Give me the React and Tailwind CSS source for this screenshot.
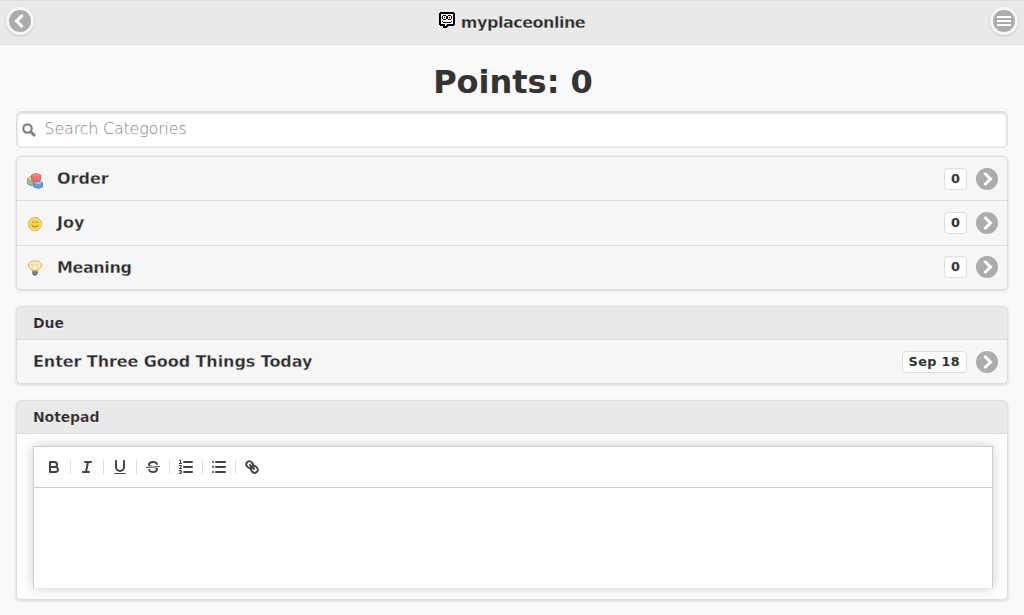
import React from "react";

const Chevron = ({ left }) => (
  <svg viewBox="0 0 14 14" className={left ? "h-[14px] w-[14px] rotate-180 overflow-visible" : "h-[14px] w-[14px] overflow-visible"} fill="#fff">
    <polygon points="3.404,2.051 8.354,7 3.404,11.95 5.525,14.07 12.596,7 5.525,-0.071" />
  </svg>
);

const Arrow = () => (
  <span className="ml-[9px] flex h-[22px] w-[22px] shrink-0 items-center justify-center rounded-full bg-[#acacac]">
    <Chevron />
  </span>
);

const Bubble = ({ children, className = "" }) => (
  <span className={`flex h-[22px] items-center justify-center rounded-[4px] border border-[#ddd] bg-white px-[6px] text-[12.8px] font-bold leading-[20px] ${className}`}>
    {children}
  </span>
);

const HeaderButton = ({ children }) => (
  <button className="flex h-[28px] w-[28px] items-center justify-center rounded-full bg-[#f6f6f6] shadow-[0_1px_3px_rgba(0,0,0,0.15)]">
    <span className="flex h-[22px] w-[22px] items-center justify-center rounded-full bg-[#acacac]">{children}</span>
  </button>
);

const Logo = () => (
  <svg width="16" height="16" viewBox="0 0 16 16" shapeRendering="crispEdges">
    <path d="M1 0h14v1h1v12h-1v1h-6v1h-1v1h-4v-2h-3v-1h-1v-12h1z" fill="#000" />
    <path d="M2 2h12v10h-6v1h-1v1h-1v-2h-4z" fill="#fff" />
    <path d="M4 3h3v1h-3z M3 4h1v3h-1z M4 7h3v1h-3z M7 4h1v3h-1z M5 5h1v1h-1z M9 3h3v1h-3z M8 4h1v3h-1z M9 7h3v1h-3z M12 4h1v3h-1z M10 5h1v1h-1z M3 9h1v1h-1z M4 10h8v1h-8z M12 9h1v1h-1z" fill="#000" />
  </svg>
);

const Cubes = () => (
  <svg width="16" height="16" viewBox="0 0 16 16" strokeWidth=".7" strokeLinejoin="round">
    <path d="M.4 5.5 3.5 3.5 7 5v6.5l-3 1.2-3.6-2z" fill="#8fc48b" stroke="#5b9a5c" />
    <path d="M.8 5.6 4 7l3-1.4-3.4-1.7z" fill="#c4e2be" />
    <path d="M6.5 9.3 10 8l5.6 1.3v4.4L11.5 15.6 6.5 13.7z" fill="#6f9cd3" stroke="#3f6ba6" />
    <path d="M6.8 9.7 11.4 11.2 15.2 9.6 10.5 8.2z" fill="#a9caed" />
    <path d="M4.4 2 9 .5 13.8 2v5.2L9.5 9 4.8 7.4z" fill="#f37373" stroke="#dc4549" />
    <path d="M5 2.2 9.4 3.6 13.3 2.1 9 .9z" fill="#f9a09c" />
    <path d="M7 1.9h4.3M9.4 4.2v4" stroke="#e25556" strokeWidth=".5" />
  </svg>
);

const Smile = () => (
  <svg width="16" height="16" viewBox="0 0 16 16" fill="none">
    <circle cx="8" cy="8" r="6.5" fill="#f8d253" stroke="#e8a921" />
    <circle cx="8" cy="8" r="5.5" stroke="#fde588" />
    <path d="M6 5.4v1.6M10 5.4v1.6" stroke="#a9791c" strokeWidth="1" />
    <path d="M4.3 8.9C5.8 11.5 10.2 11.5 11.7 8.9" stroke="#ad7d20" />
  </svg>
);

const Bulb = () => (
  <svg width="16" height="16" viewBox="0 0 16 16">
    <path d="M5.3 10.8C4.3 9 1.5 8 1.5 5 1.5 2.3 4.5.9 8 .9s6.5 1.4 6.5 4.1c0 3-2.8 4-3.8 5.8z" fill="#ffebc4" stroke="#eca65b" />
    <path d="M6 10V6.5L4.7 4.3 8 5.5l3.3-1.2L10 6.5V10z" fill="#fffdf0" stroke="#f5c95e" strokeWidth=".8" />
    <path d="M5.3 10.8h5.4v3L9.5 15.5h-3l-1.2-1.7z" fill="#5e6466" />
    <path d="M5.5 11.7h5M5.7 13.3h4.6" stroke="#b6babb" strokeWidth=".6" />
  </svg>
);

const panel = "rounded-[5px] border border-[#ddd] shadow-[0_1px_3px_rgba(0,0,0,0.15)]";

const scores = [
  { name: "Order", icon: <Cubes />, row: "h-[43px]", pad: "pt-[4px]", text: "" },
  { name: "Joy", icon: <Smile />, row: "h-[45px] border-t border-[#ddd]", pad: "pt-[2px]", text: "pb-px" },
  { name: "Meaning", icon: <Bulb />, row: "h-[44px] border-t border-[#ddd] pb-px", pad: "pt-px", text: "pt-px tracking-[-0.4px]" },
];

const S = { fill: "none", stroke: "#444", strokeWidth: 2, strokeLinecap: "round", strokeLinejoin: "round" };
const tools = [
  <g key="b" {...S}>
    <path d="M5,4H9.5A2.5,2.5,0,0,1,12,6.5v0A2.5,2.5,0,0,1,9.5,9H5V4Z" />
    <path d="M5,9h5.5A2.5,2.5,0,0,1,13,11.5v0A2.5,2.5,0,0,1,10.5,14H5V9Z" />
  </g>,
  <g key="i" {...S}><path d="M7 4H13M5 14H11M8 14 10 4" /></g>,
  <g key="u" {...S}>
    <path d="M5,3V9a4.012,4.012,0,0,0,4,4H9a4.012,4.012,0,0,0,4-4V3" />
    <rect x="3" y="15" width="12" height="1" rx=".5" fill="#444" stroke="none" />
  </g>,
  <g key="s" fill="#444">
    <path d="M15.5 8.5 2.5 9.5" stroke="#444" strokeWidth="1" strokeLinecap="round" />
    <path d="M9.007,8C6.542,7.791,6,7.519,6,6.5,6,5.792,7.283,5,9,5c1.571,0,2.765.679,2.969,1.309a1,1,0,0,0,1.9-.617C13.356,4.106,11.354,3,9,3,6.2,3,4,4.538,4,6.5a3.2,3.2,0,0,0,.5,1.843Z" />
    <path d="M8.984,10C11.457,10.208,12,10.479,12,11.5c0,0.708-1.283,1.5-3,1.5-1.571,0-2.765-.679-2.969-1.309a1,1,0,1,0-1.9.617C4.644,13.894,6.646,15,9,15c2.8,0,5-1.538,5-3.5a3.2,3.2,0,0,0-.5-1.843Z" />
  </g>,
  <g key="ol" {...S}>
    <path d="M7 4H15M7 9H15M7 14H15" />
    <path d="M2.5 2.5 3.5 2V5.5M2.3 5.5H4.7M2.3 7.5H4.2V8.8L2.5 10.5H4.7M2.3 12.5H4.3V15.5H2.3M3 14H4.3" strokeWidth="1" />
  </g>,
  <g key="ul" {...S}><path d="M6 4H15M6 9H15M6 14H15M3 4H3M3 9H3M3 14H3" /></g>,
  <g key="l" {...S}>
    <path d="M7 7 11 11" />
    <path d="M8.9,4.577a3.476,3.476,0,0,1,.36,4.679A3.476,3.476,0,0,1,4.577,8.9C3.185,7.5,2.035,6.4,4.217,4.217S7.5,3.185,8.9,4.577Z" />
    <path d="M13.423,9.1a3.476,3.476,0,0,0-4.679-.36,3.476,3.476,0,0,0,.36,4.679c1.392,1.392,2.5,2.542,4.679.36S14.815,10.5,13.423,9.1Z" />
  </g>,
];

export default function App() {
  return (
    <div className="flex h-[615px] flex-col overflow-hidden bg-[#f9f9f9] font-['DejaVu_Sans',sans-serif] text-[16px] text-[#333] [text-shadow:0_1px_0_#f3f3f3]">
      <header className="flex h-[45px] shrink-0 items-start justify-between border-y border-[#ddd] bg-[#e9e9e9] px-[6px] pt-[6px]">
        <HeaderButton><Chevron left /></HeaderButton>
        <div className="flex items-start gap-[6px] pt-[5px] font-bold tracking-[-0.5px] text-[#2b2b2b] [-webkit-text-stroke:0.3px_#e9e9e9]">
          <Logo />
          <span className="pt-px leading-[20px]">myplaceonline</span>
        </div>
        <HeaderButton>
          <svg width="14" height="14" viewBox="0 0 14 14"><path d="M0 3H14M0 7H14M0 11H14" stroke="#fff" strokeWidth="2" /></svg>
        </HeaderButton>
      </header>

      <main className="flex flex-col px-4">
        <h1 className="mt-[19px] h-[36px] pl-[2px] text-center text-[32px] font-bold leading-[37px]">Points: 0</h1>

        <div className="mt-[11px] flex h-[37px] items-center rounded-[5px] border border-[#ddd] bg-white pl-[5px] shadow-[inset_0_1px_3px_rgba(0,0,0,0.2)]">
          <svg width="14" height="14" viewBox="0 0 14 14" fill="none" stroke="#808080" strokeWidth="2.2">
            <circle cx="5.5" cy="5.5" r="4.2" /><path d="M8.7 8.7 13 13" strokeWidth="2.8" />
          </svg>
          <span className="ml-[8.5px] pb-[2px] font-extralight tracking-[-0.22px] text-[#8c8c8c]">Search Categories</span>
        </div>

        <section className={`${panel} mt-[8px] h-[134px] bg-[#f6f6f6]`}>
          {scores.map((s) => (
            <div key={s.name} className={`${s.row} flex items-center pl-[10px] pr-[9px] font-bold`}>
              <span className={s.pad}>{s.icon}</span>
              <span className={`ml-[14px] flex-1 leading-[20px] text-[#2b2b2b] [-webkit-text-stroke:0.3px_#f6f6f6] ${s.text}`}>{s.name}</span>
              <Bubble>0</Bubble>
              <Arrow />
            </div>
          ))}
        </section>

        <section className={`${panel} mt-[16px] h-[78px] bg-[#f6f6f6] font-bold`}>
          <h2 className="flex h-[33px] items-center rounded-t-[4px] border-b border-[#ddd] bg-[#e9e9e9] pl-4 text-[14px] text-[#2b2b2b] [-webkit-text-stroke:0.2px_#e9e9e9]">Due</h2>
          <div className="flex h-[43px] items-center pl-4 pr-[9px]">
            <span className="flex-1 tracking-[-0.08px] text-[#2b2b2b] [-webkit-text-stroke:0.3px_#f6f6f6]">Enter Three Good Things Today</span>
            <Bubble className="tracking-[0.35px]">Sep 18</Bubble>
            <Arrow />
          </div>
        </section>

        <section className={`${panel} mt-[16px] h-[200px] bg-white`}>
          <h2 className="flex h-[33px] items-center rounded-t-[4px] border-b border-[#ddd] bg-[#e9e9e9] pl-4 text-[14px] font-bold tracking-[-0.1px] text-[#2b2b2b] [-webkit-text-stroke:0.2px_#e9e9e9]">Notepad</h2>
          <div className="ml-[16px] mr-[14px] mt-[12px] h-[142px] border-x border-t border-[#ccc] bg-white shadow-[0_0_12px_rgba(0,0,0,0.2)]">
            <div className="flex h-[41px] items-center border-b border-[#ccc] pl-[3px]">
              {tools.map((t, i) => (
                <div key={i} className={i ? "flex h-[14px] w-[33px] items-center justify-center border-l border-[#ddd]" : "flex h-[14px] w-[33px] items-center justify-center"}>
                  <svg width="18" height="18" viewBox="0 0 18 18" className="shrink-0">{t}</svg>
                </div>
              ))}
            </div>
          </div>
        </section>
      </main>
    </div>
  );
}
